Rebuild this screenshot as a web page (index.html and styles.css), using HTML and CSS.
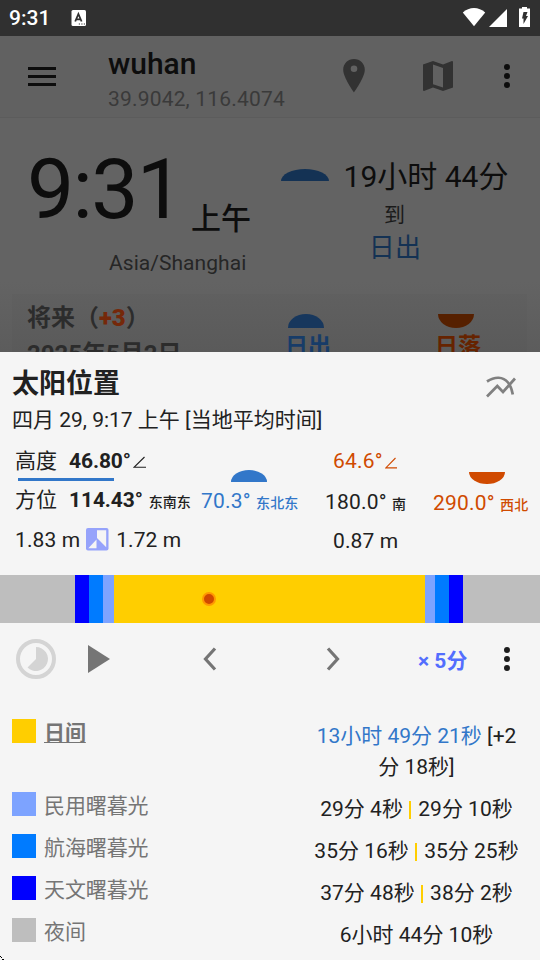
FILE: index.html
```html
<!DOCTYPE html>
<html lang="zh-CN">
<head>
<meta charset="utf-8">
<title>太阳位置</title>
<link rel="stylesheet" href="styles.css">
</head>
<body>
<div class="screen">
  <header class="status">
    <span class="status-time">9:31</span>
    <svg class="status-a" width="16" height="18" viewBox="0 0 16 18"><rect x="0.5" y="1" width="14.500" height="16" rx="1.5" fill="#fff"/><path d="M4.200 12.500 7.400 5 10.600 12.500M5.400 10.300h4" fill="none" stroke="#303030" stroke-width="1.800"/><path d="M7.800 15h1.200M10.300 15h1.200M12.800 15h1.200" stroke="#303030" stroke-width="1.2"/></svg>
    <svg class="status-icons" width="70" height="22" viewBox="0 0 70 22"><path d="M2.8 5.6C9 -.4 19 -.4 25.2 5.6L14 19.2Z" fill="#fff"/><path d="M47 2v18H29Z" fill="#fff"/><path d="M62 0h5v1.5h3V20H59V1.500h3Z" fill="#fff"/><path d="M63.500 5h4l-1.500 4h2l-4.500 8v-5.500h-1.500Z" fill="#303030"/></svg>
  </header>
  <div class="toolbar">
    <svg class="menu" width="28" height="20" viewBox="0 0 28 20"><path d="M0 2.500h28M0 10.500h28M0 18.500h28" stroke="#0d0d0d" stroke-width="3"/></svg>
    <div class="place"><div class="place-name">wuhan</div><div class="coords">39.9042, 116.4074</div></div>
    <svg class="pin" width="22" height="34" viewBox="0 0 22 34"><path fill-rule="evenodd" d="M11 0C5 0 .2 4.700.2 10.800.2 18.500 11 33.500 11 33.500S21.800 18.500 21.800 10.800C21.800 4.700 17 0 11 0Zm0 6.500a3.300 3.300 0 1 1 0 6.600 3.300 3.300 0 0 1 0-6.600Z" fill="#323232"/></svg>
    <svg class="map" width="30" height="30" viewBox="0 0 30 30"><path fill-rule="evenodd" d="M0 3.500 10 0 20 3.500 29 0Q30 0 30 1V26.500L20 30 10 26.500 1 30Q0 30 0 29ZM10 3.600V23.200L20 26.600V7Z" fill="#323232"/></svg>
    <svg class="dots" width="6" height="24" viewBox="0 0 6 24" fill="#0d0d0d"><circle cx="3" cy="3" r="3"/><circle cx="3" cy="12" r="3"/><circle cx="3" cy="21" r="3"/></svg>
  </div>
  <main class="back">
    <section class="clock">
      <div class="now">
        <div class="now-row"><span class="big">9:31</span><span class="ampm">上午</span></div>
        <div class="zone">Asia/Shanghai</div>
      </div>
      <i class="arc arc-wide"></i>
      <div class="next">
        <div class="remain">19小时 44分</div>
        <div class="to">到</div>
        <div class="event">日出</div>
      </div>
    </section>
    <section class="card">
      <div class="future"><div>将来（<b>+3</b>）</div><div class="date">2025年5月2日</div></div>
      <div class="rise"><i class="arc"></i><div>日出</div></div>
      <div class="set"><i class="arc arc-down"></i><div>日落</div></div>
    </section>
  </main>
  <section class="sheet">
    <div class="sheet-head">
      <div><h1>太阳位置</h1><p>四月 29, 9:17 上午 [当地平均时间]</p></div>
      <svg class="chart" width="30" height="22" viewBox="0 0 30 22" fill="none" stroke="#808080" stroke-width="2.700"><path d="M1 20.500 11.300 10 17 16 29 2.500"/><path d="M1 5.500C9 .2 17 .5 22 6.500 25 10 26 14 26.800 18.500"/></svg>
    </div>
    <div class="position">
      <div class="current">
        <div class="alt"><span class="label">高度</span><b>46.80°</b><svg width="13" height="12" viewBox="0 0 13 12"><path d="M11.500 1 1 11.300H13" fill="none" stroke="#212121" stroke-width="1.100"/></svg></div>
        <div class="az"><span class="label">方位</span><b>114.43°</b><small>东南东</small></div>
        <div class="shadow"><span>1.83 m</span><svg width="23" height="23" viewBox="0 0 23 23"><rect width="22.500" height="22.500" rx="2" fill="#96a3fb"/><path d="M11 2.300h9.200v17L11 10Z" fill="#f5f5f5"/><path d="M10.500 11.500V20.200H2.300Z" fill="#f5f5f5"/></svg><span>1.72 m</span></div>
      </div>
      <div class="sunrise"><i class="arc"></i><div>70.3° <small>东北东</small></div></div>
      <div class="noon">
        <div class="noon-alt">64.6°<svg width="13" height="12" viewBox="0 0 13 12"><path d="M10.500 1 .8 10.900H12" fill="none" stroke="#d04a00" stroke-width="1.100"/></svg></div>
        <div class="noon-az">180.0° <small>南</small></div>
        <div class="noon-shadow">0.87 m</div>
      </div>
      <div class="sunset"><i class="arc arc-down"></i><div>290.0° <small>西北</small></div></div>
    </div>
    <div class="bar"><i class="night s75"></i><i class="astro s14"></i><i class="naut s14"></i><i class="civil s11"></i><i class="day s311"><em></em></i><i class="civil s10"></i><i class="naut s14"></i><i class="astro s14"></i><i class="night s77"></i></div>
    <div class="controls">
      <svg class="speed" width="40" height="40" viewBox="0 0 40 40"><circle cx="20" cy="20" r="18" fill="none" stroke="#d4d4d4" stroke-width="4"/><path d="M20 20V8A12 12 0 1 1 11.500 28.500Z" fill="#d4d4d4"/></svg>
      <svg class="play" width="22" height="28" viewBox="0 0 22 28"><path d="M0 0 22 14 0 28Z" fill="#757575"/></svg>
      <svg class="prev" width="14" height="24" viewBox="0 0 14 24"><path d="M12 1.500 2.500 12 12 22.500" fill="none" stroke="#757575" stroke-width="3.200"/></svg>
      <svg class="nextstep" width="14" height="24" viewBox="0 0 14 24"><path d="M2 1.500 11.500 12 2 22.500" fill="none" stroke="#757575" stroke-width="3.200"/></svg>
      <span class="step">× 5分</span>
      <svg class="dots" width="6" height="24" viewBox="0 0 6 24" fill="#1c1c1c"><circle cx="3" cy="3" r="3"/><circle cx="3" cy="12" r="3"/><circle cx="3" cy="21" r="3"/></svg>
    </div>
    <div class="legend">
      <div class="row first"><i class="day"></i><span class="name current-name">日间</span><span class="value"><em>13小时 49分 21秒</em> [+2<br>分 18秒]</span></div>
      <div class="row"><i class="civil"></i><span class="name">民用曙暮光</span><span class="value">29分 4秒 <u></u> 29分 10秒</span></div>
      <div class="row"><i class="naut"></i><span class="name">航海曙暮光</span><span class="value">35分 16秒 <u></u> 35分 25秒</span></div>
      <div class="row"><i class="astro"></i><span class="name">天文曙暮光</span><span class="value">37分 48秒 <u></u> 38分 2秒</span></div>
      <div class="row"><i class="night"></i><span class="name">夜间</span><span class="value">6小时 44分 10秒</span></div>
    </div>
    <svg class="corner" width="4" height="4" viewBox="0 0 4 4"><path d="M0 0h1v1H0ZM1 1h1v1H1ZM2 3h1v1H2ZM3 3h1v1H3Z"/></svg>
  </section>
</div>
</body>
</html>
```
FILE: styles.css
```css
* { box-sizing: border-box; }
body { margin: 0; }
svg, i { display: block; flex: none; }
small { font-size: 14px; letter-spacing: .1px; }
em { font-style: normal; }

.screen {
  width: 540px;
  height: 960px;
  overflow: hidden;
  display: flex;
  flex-direction: column;
  background: #636363;
  color: #212121;
  font: 21px/30px Roboto, "Noto Sans CJK SC", sans-serif;
  letter-spacing: .18px;
  white-space: nowrap;
}

.status { height: 36px; background: #303030; color: #fff; display: flex; padding-left: 9px; }
.status-time { width: 62px; font-weight: 500; line-height: 37px; letter-spacing: 0; }
.status-a { margin-top: 9px; }
.status-icons { margin: 7px 0 0 373px; }

.toolbar { height: 82px; flex: none; background: #616161; border-bottom: 1px solid #5c5c5c; display: flex; padding-left: 28px; }
.menu { margin: 30px 52px 0 0; }
.place { width: 243px; }
.place-name { color: #0d0d0d; font-size: 30px; font-weight: 500; line-height: 36px; margin-top: 10px; height: 36px; letter-spacing: 0; }
.coords { color: #3a3a3a; margin-top: 2px; }
.pin { margin: 23px 0 0 -8px; }
.map { margin: 25px 0 0 58px; }
.toolbar .dots { margin: 28px 0 0 51px; }

.back { height: 234px; flex: none; display: flex; flex-direction: column; background: linear-gradient(#636363 70%, #5c5c5c); }
.clock { height: 176px; flex: none; display: flex; color: #0d0d0d; }
.now { width: 281px; padding: 22px 0 0 27px; }
.now-row { display: flex; height: 99px; }
.big { width: 164px; font-size: 84px; line-height: 100px; letter-spacing: -1.7px; }
.ampm { font-size: 30px; font-weight: 500; line-height: 40px; margin-top: 59px; letter-spacing: 0; }
.zone { margin: 9px 0 0 82px; color: #262626; letter-spacing: .05px; }
.arc { width: 36px; height: 12px; background: #3277c9; border-radius: 50% 50% 0 0 / 100% 100% 0 0; }
.arc-down { background: #d04a00; border-radius: 0 0 50% 50% / 0 0 100% 100%; }
.arc-wide { width: 48px; background: #143254; margin-top: 51px; }
.next { width: 194px; display: flex; flex-direction: column; align-items: center; padding-top: 39px; }
.remain { font-size: 30px; line-height: 40px; letter-spacing: 0; }
.to { margin: 3px 0 0 -63px; color: #1a1a1a; }
.event { font-size: 26px; line-height: 34px; margin: 1px 0 0 -62px; color: #143254; }

.card { flex: 1; margin: 0 13px 0 12px; padding-left: 15px; display: flex; font-size: 24px; font-weight: 700; color: #2c2c2c; background: #00000004; overflow: hidden; letter-spacing: 0; }
.future { width: 259px; padding-top: 9px; }
.future b { color: #75280a; }
.date { margin-top: 6px; }
.rise, .set { width: 150px; color: #173c68; font-weight: 700; font-size: 23px; }
.rise .arc, .set .arc { margin: 20px 0 0 2px; height: 14px; background: #17375d; }
.rise div, .set div { margin: 4px 0 0 -1px; }
.set { width: 80px; color: #662300; }
.set .arc { background: #562000; }

.sheet { height: 608px; flex: none; background: #f5f5f5; position: relative; }
.sheet-head { height: 88px; display: flex; justify-content: space-between; padding: 15px 24px 0 12px; }
h1 { margin: 0; font-size: 27px; font-weight: 700; line-height: 34px; letter-spacing: 0; }
p { margin: 4px 0 0; letter-spacing: 0; }
.chart { margin-top: 9px; }

.position { height: 135px; display: flex; }
.current { width: 201px; padding-left: 15px; }
.alt, .az, .shadow { display: flex; height: 30px; }
.alt b, .az b { letter-spacing: -.1px; }
.alt { margin-top: 6px; }
.alt svg { margin: 10px 0 0 2px; }
.label { width: 54px; letter-spacing: 0; }
.alt::after { content: ""; width: 96px; height: 3px; margin: 32px 0 0 -128px; flex: none; background: #3277c9; }
.az { margin-top: 9px; }
.az small { margin-left: 6px; line-height: 34px; font-weight: 500; letter-spacing: 0; }
.shadow { margin-top: 10px; letter-spacing: .1px; }
.shadow svg { margin: 3px 7px 0 6px; }
.sunrise { width: 124px; color: #3277c9; }
.sunrise .arc { margin: 30px 0 0 30px; }
.sunrise div { margin-top: 4px; }
.sunrise small, .sunset small, .noon small { font-weight: 500; }
.noon { width: 108px; }
.noon-alt { display: flex; color: #d04a00; margin: 6px 0 0 8px; height: 30px; }
.noon-alt svg { margin: 11px 0 0 2px; }
.noon-az { margin-top: 11px; }
.noon-shadow { margin: 7px 0 0 8px; letter-spacing: .1px; }
.sunset { color: #d04a00; }
.sunset .arc { margin: 32px 0 0 36px; }
.sunset div { margin-top: 4px; }

.bar { display: flex; height: 48px; }
.night { background: #bebebe; }
.astro { background: #0000ff; }
.naut { background: #007bff; }
.civil { background: #7da3ff; }
.day { background: #ffce00; }
.s75 { width: 75px; } .s14 { width: 14px; } .s11 { width: 11px; } .s10 { width: 10px; } .s77 { width: 77px; }
.s311 { width: 311px; }
.s311 em { display: block; width: 14px; height: 14px; margin: 17px 0 0 88px; border: 2px solid #ff9800; border-radius: 50%; background: #d04a00; }

.controls { height: 91px; display: flex; padding-left: 16px; }
.speed { margin-top: 16px; }
.play { margin: 22px 0 0 32px; }
.prev { margin: 24px 0 0 93px; }
.nextstep { margin: 24px 0 0 109px; }
.step { width: 86px; margin: 23px 0 0 78px; color: #536dfe; font-weight: 700; letter-spacing: 0; }
.controls .dots { margin: 24px 0 0; }

.row { height: 42px; display: flex; padding-left: 12px; }
.row.first { height: 74px; padding-top: 1px; }
.row i { width: 24px; height: 24px; margin-top: 4px; }
.name { width: 257px; margin: 3px 0 0 8px; color: #757575; letter-spacing: -.1px; }
.current-name { font-weight: 700; text-decoration: underline; text-decoration-thickness: 1px; text-underline-offset: 2px; }
.value { width: 231px; text-align: center; line-height: 31px; margin-top: 6px; letter-spacing: 0; }
.value em { color: #3277c9; }
.value u { display: inline-block; width: 2px; height: 18px; margin: 0 2px 0 1px; vertical-align: -3px; background: #ffce00; }
.corner { position: absolute; left: 0; bottom: 0; }
```
